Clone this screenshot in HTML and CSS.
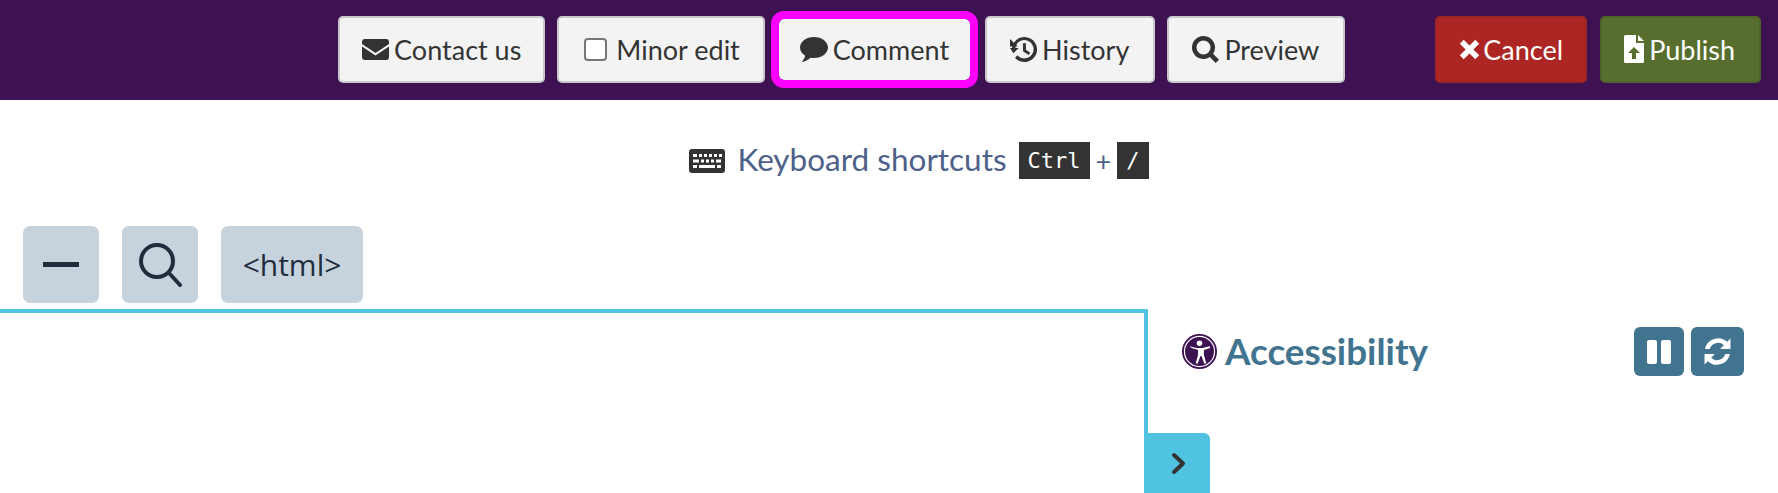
FILE: index.html
```html
<!DOCTYPE html>
<html lang="en">
<head>
    <meta charset="UTF-8">
    <title>Edit page</title>
    <link rel="stylesheet" href="styles.css">
</head>
<body>
    <div class="topbar">
        <div class="btn-group">
            <button class="btn">
                <svg class="icon" viewBox="0 0 27 21"><path d="M3 0h21a3 3 0 0 1 3 3v2L13.500 14 0 5V3a3 3 0 0 1 3-3zM0 7.500l13.500 9 13.500-9V18a3 3 0 0 1-3 3H3a3 3 0 0 1-3-3z"/></svg>
                Contact us
            </button>
            <label class="btn btn-check"><span class="checkbox"></span>Minor edit</label>
            <button class="btn btn-focus">
                <svg class="icon icon-comment" viewBox="0 0 28 25"><path d="M14 0c7.700 0 14 4.700 14 10.500S21.700 21 14 21c-1.200 0-2.400-.1-3.500-.3C8.200 23 5 24.600 1.800 25c1.500-1.600 3-3.700 3.300-6.400C2 16.700 0 13.800 0 10.500 0 4.700 6.300 0 14 0z"/></svg>
                Comment
            </button>
            <button class="btn btn-wide">
                <svg class="icon icon-square" viewBox="0 0 28 26"><path d="M15 0a13 13 0 1 1-9.800 21.500l2.600-2.500A9.500 9.500 0 1 0 5.500 11.500H9L3.500 17 0 11.500h2.100A13 13 0 0 1 15 0z"/><path d="M0 2l8 8H0z"/><path d="M13.500 6.500h3v6.800l4.500 3-1.700 2.500-5.800-3.900z"/></svg>
                History
            </button>
            <button class="btn btn-wide">
                <svg class="icon icon-square" viewBox="0 0 27 27"><path d="M11.500 0a11.500 11.500 0 0 1 9.600 17.800l5.900 5.900-3.300 3.300-5.900-5.900A11.500 11.500 0 1 1 11.500 0zm0 4.500a7 7 0 1 0 0 14 7 7 0 0 0 0-14z"/></svg>
                Preview
            </button>
        </div>
        <div class="btn-group btn-group-end">
            <button class="btn btn-cancel">
                <svg class="icon icon-x" viewBox="0 0 20 20"><path d="M4.500.8 10 6.300 15.500.8l3.700 3.700L13.700 10l5.500 5.500-3.700 3.700L10 13.700l-5.500 5.500-3.700-3.700L6.300 10 .8 4.500z"/></svg>
                Cancel
            </button>
            <button class="btn btn-publish">
                <svg class="icon icon-file" viewBox="0 0 20 28"><path fill-rule="evenodd" d="M1.500 0H12v8h8v18.500a1.500 1.500 0 0 1-1.500 1.500h-17A1.500 1.500 0 0 1 0 26.500v-25A1.500 1.500 0 0 1 1.500 0zM14 0l6 6h-6zM10 12l-6 6h4v6h4v-6h4z"/></svg>
                Publish
            </button>
        </div>
    </div>

    <div class="shortcuts">
        <svg class="kbd-icon" viewBox="0 0 36 24"><path fill-rule="evenodd" d="M3 0h30a3 3 0 0 1 3 3v18a3 3 0 0 1-3 3H3a3 3 0 0 1-3-3V3a3 3 0 0 1 3-3zM4 5v3h4V5zm6 0v3h3V5zm5 0v3h3V5zm5 0v3h3V5zm5 0v3h3V5zm5 0v3h3V5zM4 10.500v3h6v-3zm8 0v3h3v-3zm5 0v3h3v-3zm5 0v3h3v-3zm5 0v3h5v-3zM4 16v3h4v-3zm6 0v3h16v-3zm18 0v3h4v-3z"/></svg>
        <span class="shortcuts-label">Keyboard shortcuts</span>
        <kbd>Ctrl</kbd><span class="plus">+</span><kbd>/</kbd>
    </div>

    <div class="editor-tools">
        <button class="tool">
            <svg width="36" height="5" viewBox="0 0 36 5"><path d="M0 0h36v5H0z"/></svg>
        </button>
        <button class="tool">
            <svg width="43" height="44" viewBox="0 0 43 44"><circle cx="18" cy="18" r="16" fill="none" stroke-width="4"/><path d="M30 30l11 12" fill="none" stroke-width="4" stroke-linecap="round"/></svg>
        </button>
        <button class="tool tool-text">&lt;html&gt;</button>
    </div>

    <div class="workspace">
        <div class="canvas">
            <button class="panel-toggle">
                <svg width="15" height="23" viewBox="0 0 15 23"><path d="M3 3l9 8.500-9 8.500" fill="none" stroke="#333" stroke-width="4" stroke-linecap="round" stroke-linejoin="round"/></svg>
            </button>
        </div>
        <div class="side-panel">
            <h2 class="panel-title">
                <svg class="a11y-icon" viewBox="0 0 36 36">
                    <circle cx="18" cy="18" r="18" fill="#3d1152"/>
                    <circle cx="18" cy="18" r="15.500" fill="none" stroke="#fff" stroke-width="1.200"/>
                    <circle cx="18" cy="9.500" r="2.800" fill="#fff"/>
                    <path d="M7.500 12.500 15 14.500h6l7.500-2 .6 1.800-6.600 2.200v5l2.500 8.500-2 .6-3-8h-1l-3 8-2-.6 2.500-8.500v-5l-6.600-2.200z" fill="#fff"/>
                </svg>
                <span class="panel-title-text">Accessibility</span>
            </h2>
            <div class="panel-actions">
                <button class="panel-btn">
                    <svg width="24" height="24" viewBox="0 0 24 24"><rect x="0" y="0" width="10" height="24" rx="2"/><rect x="14" y="0" width="10" height="24" rx="2"/></svg>
                </button>
                <button class="panel-btn panel-btn-wide">
                    <svg width="27" height="27" viewBox="0 0 26 26"><path d="M25.500.5v10h-10l3.600-3.600A8.300 8.300 0 0 0 5.500 10.500H1A12.800 12.800 0 0 1 22.300 3.700zM.5 25.500v-10h10l-3.600 3.600A8.300 8.300 0 0 0 20.500 15.500H25A12.800 12.800 0 0 1 3.700 22.300z"/></svg>
                </button>
            </div>
        </div>
    </div>
</body>
</html>
```

FILE: styles.css
```css
* {
    box-sizing: border-box;
}
html, body {
    margin: 0;
    height: 100%;
    overflow: hidden;
}
body {
    display: flex;
    flex-direction: column;
    background: #fff;
    color: #333;
    font-family: "Lato", sans-serif;
}
button {
    font-family: inherit;
}

/* Top bar */
.topbar {
    display: flex;
    justify-content: flex-end;
    align-items: center;
    height: 100px;
    padding-right: 17px;
    padding-bottom: 1px;
    background: #3d1152;
}
.btn-group {
    display: flex;
    align-items: center;
    gap: 12px;
}
.btn-group-end {
    gap: 13px;
    margin-left: 90px;
}
.btn {
    display: flex;
    align-items: center;
    justify-content: center;
    height: 67px;
    padding: 0 22px 1px;
    gap: 5px;
    background: #f3f3f3;
    border: 2px solid #c9c6cc;
    border-radius: 5px;
    color: #333;
    font-size: 27px;
    white-space: nowrap;
}
.btn-wide {
    padding: 0 24px 1px 23px;
}
.btn-check {
    padding: 0 23px 1px 25px;
    gap: 4px;
}
.checkbox {
    width: 23px;
    height: 23px;
    margin-right: 5px;
    background: #fff;
    border: 2px solid #767676;
    border-radius: 4px;
}
.btn-focus {
    height: 61px;
    margin: 0 3px 0 2px;
    padding: 0 21px 1px;
    border: none;
    outline: 8px solid #f0f;
    border-radius: 5px;
}
.btn-cancel {
    gap: 3px;
    background: #ae2623;
    border-color: #9c2422;
    color: #fff;
}
.btn-publish {
    padding-right: 24px;
    background: #586e2f;
    border-color: #4e632a;
    color: #fff;
}
.icon {
    width: 27px;
    height: 21px;
    fill: #333;
}
.icon-comment {
    width: 28px;
    height: 25px;
}
.icon-square {
    height: 27px;
}
.icon-x {
    width: 21px;
    height: 21px;
    fill: #fff;
}
.icon-file {
    width: 20px;
    height: 28px;
    fill: #fff;
}

/* Keyboard shortcuts line */
.shortcuts {
    display: flex;
    justify-content: center;
    align-items: center;
    height: 43px;
    margin-top: 39px;
    padding-left: 60px;
}
.kbd-icon {
    width: 36px;
    height: 24px;
    margin-right: 12px;
    fill: #333;
}
.shortcuts-label {
    margin-right: 12px;
    padding-bottom: 3px;
    color: #4d6189;
    font-size: 31.500px;
}
kbd {
    padding: 1px 9px 0;
    background: #333;
    color: #fff;
    font-family: "DejaVu Sans Mono", monospace;
    font-size: 22px;
    line-height: 36px;
}
.plus {
    margin: 0 6px;
    color: #4d6189;
    font-size: 27px;
}

/* Editor tools */
.editor-tools {
    display: flex;
    gap: 23px;
    margin-top: 44px;
    padding-left: 23px;
}
.tool {
    display: flex;
    align-items: center;
    justify-content: center;
    width: 76px;
    height: 77px;
    padding: 0;
    background: #c6d3dd;
    border: none;
    border-radius: 7px;
    color: #1f2d3d;
    fill: #1f2d3d;
    stroke: #1f2d3d;
}
.tool-text {
    width: 142px;
    font-family: "Open Sans", sans-serif;
    font-size: 30px;
}

/* Canvas and side panel */
.workspace {
    display: flex;
    flex: 1;
    margin-top: 6px;
}
.canvas {
    position: relative;
    width: 1148px;
    border-top: 4px solid #4fc3df;
    border-right: 4px solid #4fc3df;
}
.panel-toggle {
    position: absolute;
    top: 120px;
    left: 1144px;
    display: flex;
    align-items: center;
    justify-content: center;
    width: 66px;
    height: 60px;
    padding: 0 0 0 2px;
    background: #4fc3df;
    border: none;
    border-radius: 0 6px 0 0;
}
.side-panel {
    display: flex;
    flex: 1;
    justify-content: space-between;
    align-items: center;
    height: 49px;
    margin-top: 18px;
    padding: 0 34px;
}
.panel-title {
    display: flex;
    align-items: center;
    gap: 8px;
    margin: 0;
    color: #41748f;
    font-size: 36.800px;
    font-weight: 700;
    line-height: 46px;
}
.panel-title-text {
    padding-bottom: 2px;
}
.a11y-icon {
    width: 35px;
    height: 35px;
}
.panel-actions {
    display: flex;
    gap: 7px;
}
.panel-btn {
    display: flex;
    align-items: center;
    justify-content: center;
    width: 50px;
    height: 49px;
    padding: 0;
    background: #41748f;
    border: none;
    border-radius: 6px;
    fill: #fff;
}
.panel-btn-wide {
    width: 53px;
}
```
